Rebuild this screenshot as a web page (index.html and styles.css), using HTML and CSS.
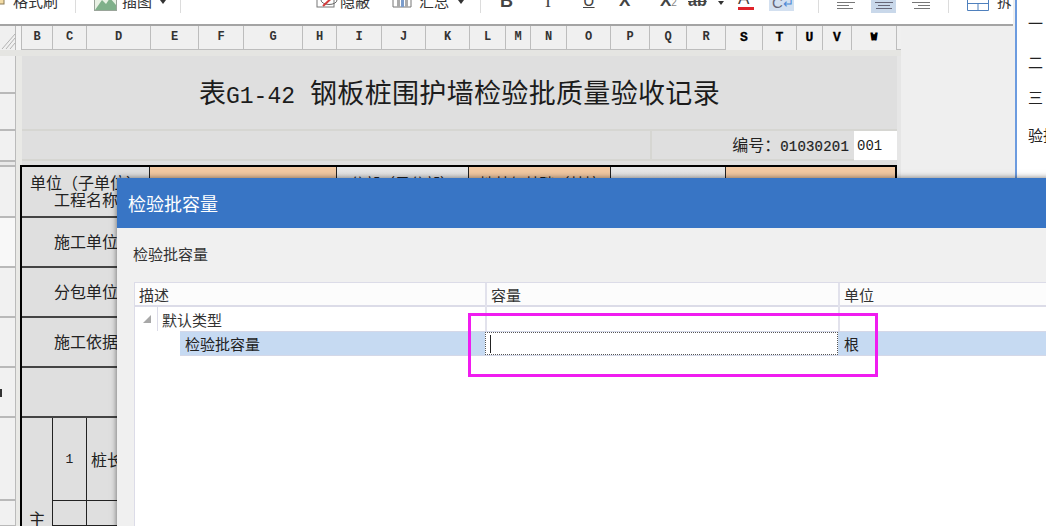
FILE: index.html
```html
<!DOCTYPE html>
<html lang="zh">
<head>
<meta charset="utf-8">
<title>检验批容量</title>
<link rel="stylesheet" href="styles.css">
</head>
<body>
<div class="app">
  <div class="main">
    <div class="toolbar">
      <span class="tool w-brush">
        <svg class="ico" width="5" height="14" viewBox="0 0 5 14"><rect x="-4" y="4" width="8" height="6" fill="#f3dca6" stroke="#8a7a55"/></svg>
        <span class="tx">格式刷</span>
      </span>
      <i class="sep s1"></i>
      <span class="tool w-pic">
        <svg class="ico" width="23" height="20" viewBox="0 0 23 20"><rect x="0.5" y="0.5" width="22" height="19" fill="#e8f1e4" stroke="#9aa59a"/><path d="M1 19 L8 9 L12 13 L16 7 L22 14 V19Z" fill="#7fb08a"/></svg>
        <span class="tx">插图</span><span class="caret"></span>
      </span>
      <i class="sep s2"></i>
      <span class="tool w-hide">
        <svg class="ico" width="24" height="20" viewBox="0 0 24 20"><rect x="1" y="4" width="17" height="12" fill="#fff" stroke="#777"/><ellipse cx="13" cy="9" rx="8" ry="4.5" fill="none" stroke="#666"/><path d="M7 15 L19 4" stroke="#d43b3b" stroke-width="2"/></svg>
        <span class="tx">隐蔽</span>
      </span>
      <span class="tool w-sum">
        <svg class="ico" width="20" height="20" viewBox="0 0 20 20"><path d="M1 4 V16 H19 M19 4 V16" fill="none" stroke="#777"/><rect x="5" y="7" width="3" height="9" fill="#aaa"/><rect x="9" y="3" width="3" height="13" fill="#7a9ccc"/><rect x="13" y="8" width="3" height="8" fill="#aaa"/></svg>
        <span class="tx tx-sum">汇总</span><span class="caret"></span>
      </span>
      <i class="sep s3"></i>
      <b class="fmt f-b">B</b>
      <span class="fmt f-i">I</span>
      <span class="fmt f-u">U</span>
      <span class="fmt f-x">X</span>
      <span class="fmt f-x2">X<small>2</small></span>
      <span class="fmt f-s">ab</span><span class="caret c-s"></span>
      <span class="fmt f-a">A</span>
      <span class="fmt f-c">C<span class="ret">↵</span></span>
      <i class="sep s4"></i>
      <svg class="al a-l" width="18" height="9" viewBox="0 0 18 9"><path d="M0 1.5H18M0 4.5H12M0 7.5H16" stroke="#777"/></svg>
      <span class="al-on"><svg width="18" height="9" viewBox="0 0 18 9"><path d="M0 1.5H18M3 4.5H15M1 7.5H17" stroke="#667"/></svg></span>
      <svg class="al a-r" width="18" height="9" viewBox="0 0 18 9"><path d="M0 1.5H18M6 4.5H18M2 7.5H18" stroke="#777"/></svg>
      <i class="sep s5"></i>
      <svg class="merge" width="22" height="11" viewBox="0 0 22 11"><path d="M0.5 0V10.5H21.5V0M0.5 3.5H21.5M11 3.5V10.5" fill="none" stroke="#4f80bd"/></svg>
      <span class="tx tx-split">拆</span>
    </div>

    <div class="colhead">
      <div class="corner"><svg width="16" height="24" viewBox="0 0 16 24"><path d="M2 23 L15 8 M6 23 L15 12 M10 23 L15 17" stroke="#b4b4b4"/></svg></div>
      <div class="corner-sliver"></div>
      <div class="cols">
        <span>B</span><span>C</span><span>D</span><span>E</span><span>F</span><span>G</span><span>H</span><span>I</span><span>J</span><span>K</span><span>L</span><span>M</span><span>N</span><span>O</span><span>P</span><span>Q</span><span>R</span>
        <span class="dk">S</span><span class="dk">T</span><span class="dk">U</span><span class="dk">V</span><span class="dk blob">W</span><span class="endcol"></span>
      </div>
    </div>

    <div class="band"></div>

    <div class="sheetwrap">
      <div class="rowhead">
        <span class="rh r37"></span><span class="rh r37b"></span><span class="rh r30"></span><span class="rh r5"></span><span class="rh r52"></span><span class="rh r50 pale"></span><span class="rh r50"></span><span class="rh r50"></span><span class="rh r50 mark"></span><span class="rh r83"></span><span class="rh r26"></span>
      </div>
      <div class="strip"></div>
      <div class="canvas">
        <div class="titlerow">
          <span class="title">表<span class="mono">G1-42</span><span class="rest">钢板桩围护墙检验批质量验收记录</span></span>
        </div>
        <div class="numrow">
          <span class="numcell"><span class="numtx">编号：<span class="mono2">01030201</span></span></span>
          <span class="numval">001</span>
        </div>
        <div class="form">
          <div class="r1">
            <div class="c lab">
              <span class="l1">单位（子单位）</span>
              <span class="l2">工程名称</span>
            </div>
            <div class="c or o1"></div>
            <div class="c lab2">分部（子分部）</div>
            <div class="c or2">地基与基础（基坑</div>
            <div class="c lab3"></div>
            <div class="c or o3"></div>
          </div>
          <div class="fr">施工单位</div>
          <div class="fr">分包单位</div>
          <div class="fr">施工依据</div>
          <div class="fr"></div>
          <div class="r7">
            <div class="vz"><span>主</span></div>
            <div class="sub">
              <div class="sr sr1"><span class="n">1</span><span class="pn">桩长</span></div>
              <div class="sr sr2"><span class="n"></span><span class="pn"></span></div>
            </div>
          </div>
        </div>
      </div>
      <div class="tail"></div>
    </div>
  </div>

  <div class="panel">
    <span class="p1">一</span>
    <span class="p2">二</span>
    <span class="p3">三</span>
    <span class="p4">验批</span>
  </div>

  <div class="dialog">
    <div class="dhead">检验批容量</div>
    <div class="dbody">
      <div class="dlabel">检验批容量</div>
      <div class="grid">
        <div class="ghead"><span class="g1">描述</span><span class="g2">容量</span><span class="g3">单位</span></div>
        <div class="gparent">
          <span class="g1p"><span class="exp"></span><span class="ptx">默认类型</span></span>
          <span class="g2p"></span>
          <span class="g3p"></span>
        </div>
        <div class="gchild">
          <span class="g1c">检验批容量</span>
          <span class="g2c"><span class="cursor"></span></span>
          <span class="g3c">根</span>
        </div>
      </div>
    </div>
  </div>
  <div class="highlight"></div>
</div>
</body>
</html>
```
FILE: styles.css
```css
* { box-sizing: border-box; }
html, body { margin: 0; padding: 0; }
body { width: 1046px; height: 526px; overflow: hidden; font-family: "Noto Sans CJK SC", "Liberation Sans", sans-serif; color: #222; background: #efefef; }
.app { position: relative; width: 1046px; height: 526px; display: flex; overflow: hidden; }
.main { width: 1015px; flex: none; display: flex; flex-direction: column; }

/* toolbar */
.toolbar { height: 26px; flex: none; background: #fff; border-bottom: 2px solid #a4a4a4; margin-right: 2px; display: flex; align-items: flex-end; padding-bottom: 11px; overflow: hidden; color: #333; font-size: 15px; }
.tool { display: flex; align-items: center; height: 24px; flex: none; }
.tx { line-height: 24px; }
.ico { flex: none; }
.caret { width: 0; height: 0; border: 3px solid transparent; border-top: 4px solid #333; border-bottom: 0; margin-top: 2px; flex: none; }
.sep { width: 1px; height: 24px; background: #dcdcdc; flex: none; }
.w-brush { width: 75px; }
.w-brush .tx { margin-left: 8px; }
.w-pic { width: 86px; margin-left: 18px; }
.w-pic .tx { margin-left: 5px; }
.w-pic .caret { margin-left: 8px; }
.s1 { margin-left: 0; }
.s2 { margin-left: 0; }
.w-hide { margin-left: 135px; width: 76px; }
.w-sum { width: 72px; }
.w-sum .tx-sum { margin-left: 7px; }
.w-sum .caret { margin-left: 9px; }
.s3 { margin-left: 16px; }
.fmt { flex: none; height: 24px; line-height: 24px; font-family: "Liberation Sans", sans-serif; color: #444; }
.f-b { font-size: 18px; margin-left: 19px; width: 14px; }
.f-i { font-family: "Liberation Serif", serif; font-size: 18px; margin-left: 31px; width: 8px; }
.f-u { font-size: 16px; margin-left: 30px; width: 14px; text-decoration: underline; text-underline-offset: 1px; }
.f-x { font-size: 17px; font-weight: bold; margin-left: 22px; width: 12px; }
.f-x2 { font-size: 17px; font-weight: bold; margin-left: 29px; width: 22px; }
.f-x2 small { font-size: 10px; font-weight: normal; color: #888; }
.f-s { font-size: 16px; font-weight: bold; margin-left: 6px; width: 24px; text-decoration: line-through; }
.c-s { margin-left: 6px; margin-bottom: 8px; }
.f-a { font-size: 17px; margin-left: 14px; width: 16px; line-height: 20px; border-bottom: 3px solid #e0232a; height: 21px; margin-bottom: 3px; }
.f-c { margin-left: 15px; width: 25px; height: 22px; margin-bottom: 2px; background: #d3e0f0; font-size: 15px; line-height: 28px; padding-left: 3px; color: #667; }
.ret { color: #4d8ad6; font-size: 13px; }
.s4 { margin-left: 24px; }
.al { flex: none; margin-bottom: 3px; }
.a-l { margin-left: 18px; }
.al-on { flex: none; width: 25px; height: 24px; margin-left: 16px; background: #c9d8ea; display: flex; align-items: flex-end; justify-content: center; padding-bottom: 3px; }
.a-r { margin-left: 16px; }
.s5 { margin-left: 18px; }
.merge { margin-left: 18px; flex: none; margin-bottom: 2px; }
.tx-split { margin-left: 8px; flex: none; height: 24px; font-size: 15px; }

/* column header */
.colhead { height: 24px; flex: none; display: flex; background: #efefef; }
.corner { width: 16px; flex: none; border-right: 1px solid #bbb; background: #f0f0f0; }
.corner svg { display: block; }
.corner-sliver { width: 6px; flex: none; border-right: 1px solid #bbb; background: #f4f4f4; }
.cols { display: grid; width: 879px; grid-template-columns: 31px 34px 64px 48px 45px 59px 34px 45px 44px 44px 36px 25px 36px 44px 39px 37px 39px 37px 34px 26px 29px 45px 4px; flex: none; }
.cols span { font-family: "Liberation Mono", monospace; font-weight: bold; font-size: 12px; line-height: 23px; text-align: center; border-right: 1px solid #bdbdbd; border-bottom: 1px solid #bdbdbd; color: #333; background: #f0f0f0; }
.cols span.dk { color: #000; font-size: 13px; border-bottom: 0; -webkit-text-stroke: .3px #000; }
.cols span.blob { -webkit-text-stroke: 1.2px #000; font-size: 10px; }
.cols span.endcol { border-right: 0; }
.band { height: 6px; flex: none; width: 901px; background: #e5e5e2; }

/* sheet */
.sheetwrap { flex: 1; display: flex; min-height: 0; overflow: hidden; }
.rowhead { width: 16px; flex: none; display: flex; flex-direction: column; }
.rh { display: block; flex: none; background: #f1f1f1; border-bottom: 2px solid #b9b9b9; border-right: 1px solid #bbb; position: relative; }
.r37 { height: 38px; }
.r37b { height: 37px; }
.r30 { height: 31px; }
.r5 { height: 5px; background: #e9e9e9; }
.r52 { height: 51px; }
.r50 { height: 50px; }
.pale { background: #f8f8f8; }
.mark::before { content: ""; position: absolute; left: 0; top: 21px; width: 2px; height: 8px; background: #333; }
.r83 { height: 83px; }
.r26 { height: 26px; }
.strip { width: 6px; flex: none; background: #e9e9e6; }
.canvas { width: 875px; flex: none; background: #dfdfdf; display: flex; flex-direction: column; }
.titlerow { height: 75px; flex: none; border-bottom: 2px solid #d6d6d2; display: flex; align-items: center; padding: 4px 0 0 177px; }
.title { font-size: 27px; color: #1c1c1c; white-space: nowrap; line-height: 70px; }
.mono { font-family: "Liberation Mono", monospace; font-size: 23px; }
.rest { margin-left: 15px; letter-spacing: .33px; }
.numrow { height: 30px; flex: none; display: flex; }
.numcell { width: 832px; border-bottom: 2px solid #d6d6d2; display: flex; justify-content: flex-end; padding-right: 5px; align-items: center; position: relative; }
.numcell::before { content: ""; position: absolute; left: 628px; top: 0; bottom: 0; width: 2px; background: #d6d6d2; }
.numtx { font-size: 16px; line-height: 28px; color: #222; }
.mono2 { font-family: "Liberation Mono", monospace; font-size: 14px; letter-spacing: .2px; -webkit-text-stroke: .2px #222; }
.numval { width: 43px; background: #fff; font-family: "Liberation Mono", monospace; font-size: 14px; line-height: 31px; padding-left: 3px; color: #222; height: 29px; }

.form { margin: 4px 0 0 -2px; width: 877px; flex: 1; border: solid #000; border-width: 2px 2px 0 2px; display: flex; flex-direction: column; font-size: 16px; color: #222; }
.r1 { height: 51px; flex: none; display: grid; grid-template-columns: 128px 187px 132px 142px 115px 1fr; border-bottom: 2px solid #444; }
.c { border-right: 1px solid #222; overflow: hidden; white-space: nowrap; }
.lab { position: relative; display: flex; flex-direction: column; line-height: 16px; padding-top: 7px; }
.l1 { padding-left: 8px; }
.l2 { padding-left: 32px; margin-top: 1px; }
.or, .or2 { background: #f1c8a2; }
.lab2, .lab3 { background: linear-gradient(#e6e6e6, #dcdcdc); }
.lab2, .or2 { text-align: center; padding-top: 5px; font-size: 15px; }
.o3 { border-right: 0; }
.fr { height: 50px; flex: none; border-bottom: 2px solid #444; padding-left: 32px; line-height: 46px; }
.r7 { flex: 1; display: flex; }
.vz { width: 31px; flex: none; border-right: 1px solid #222; display: flex; align-items: flex-end; justify-content: center; font-size: 17px; }
.vz span { line-height: 18px; margin-bottom: -2px; }
.sub { flex: 1; display: flex; flex-direction: column; }
.sr { display: flex; flex: none; border-bottom: 1px solid #222; }
.sr1 { height: 83px; }
.sr2 { flex: 1; }
.n { width: 34px; border-right: 1px solid #222; text-align: center; font-family: "Liberation Mono", monospace; font-size: 13px; line-height: 83px; }
.pn { padding-left: 4px; font-size: 16px; line-height: 83px; }
.tail { width: 4px; flex: none; background: #e6e6e6; }

/* right panel */
.panel { flex: 1; background: #fff; border-left: 2px solid #6c9bdf; margin-left: 0; font-size: 15px; color: #222; display: flex; flex-direction: column; padding-left: 11px; overflow: hidden; white-space: nowrap; }
.panel span { display: block; line-height: 20px; }
.p1 { margin-top: 13px; }
.p2 { margin-top: 19px; }
.p3 { margin-top: 15px; }
.p4 { margin-top: 18px; }

/* dialog */
.dialog { position: absolute; left: 117px; top: 178px; right: -20px; bottom: -20px; background: #f0f0f0; box-shadow: 0 0 6px rgba(0, 0, 0, .55); display: flex; flex-direction: column; }
.dhead { height: 50px; flex: none; background: #3875c5; color: #fff; font-size: 18px; line-height: 50px; padding-left: 11px; }
.dbody { flex: 1; display: flex; flex-direction: column; padding-left: 17px; min-height: 0; }
.dlabel { height: 54px; flex: none; font-size: 15px; line-height: 52px; color: #333; margin-left: -1px; }
.grid { flex: 1; background: #fff; border: 1px solid #dcdce8; border-right: 0; font-size: 15px; color: #333; }
.ghead { height: 24px; display: grid; grid-template-columns: 350px 353px 1fr; background: #fcfcfc; border-bottom: 2px solid #dcdce8; line-height: 24px; }
.ghead span { padding-left: 4px; }
.g2, .g3 { border-left: 2px solid #e2e2ec; }
.gparent { height: 24px; display: grid; grid-template-columns: 350px 353px 1fr; line-height: 26px; }
.g1p { display: flex; align-items: center; height: 24px; }
.exp { width: 0; height: 0; margin-left: 8px; border-style: solid; border-width: 0 0 8px 8px; border-color: transparent transparent #a8a8a8 transparent; flex: none; }
.ptx { flex: 1; margin-left: 6px; padding-left: 4px; border-left: 1px solid #dcdce8; height: 24px; color: #333; }
.g2p, .g3p { border-left: 2px solid #e2e2ec; }
.gchild { height: 25px; margin-left: 45px; display: grid; grid-template-columns: 305px 353px 1fr; background: #c6daf2; border: solid #d4d8e8; border-width: 1px 0; line-height: 23px; color: #222; }
.g1c { padding-left: 5px; }
.g2c { background: #fff; border: 1px dotted #555; margin-top: 0; height: 23px; position: relative; padding-left: 4px; display: flex; align-items: center; }
.cursor { display: block; width: 1px; height: 18px; background: #222; }
.g3c { padding-left: 6px; }

/* annotation */
.highlight { position: absolute; left: 468px; top: 313px; width: 410px; height: 64px; border: 3px solid #f01cf0; }
```
